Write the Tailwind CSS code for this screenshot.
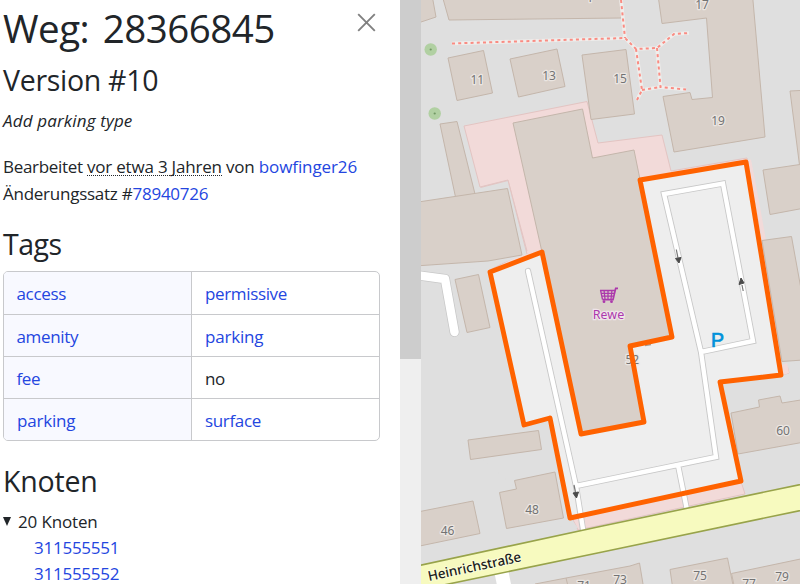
<!DOCTYPE html>
<html lang="de">
<head>
<meta charset="utf-8">
<title>Weg: 28366845</title>
<script src="https://cdn.jsdelivr.net/npm/@tailwindcss/browser@4"></script>
</head>
<body class="w-[800px] h-[584px] overflow-hidden bg-white">
<div class="flex h-[584px] overflow-hidden font-['Open_Sans','Noto_Sans',sans-serif] text-[#212529]">
  <aside class="w-[400px] shrink-0 overflow-hidden pl-[3px] pr-5 text-[17px] leading-[27px] tracking-[-0.3px]">
    <header class="flex h-[58px] items-start justify-between">
      <h1 class="whitespace-nowrap text-[38.5px] leading-[57px] tracking-[-0.5px] [word-spacing:4px]">Weg: 28366845</h1>
      <button class="mt-[13px] mr-1" aria-label="Schließen"><svg class="block" width="19" height="19" viewBox="0 0 19 19" fill="none" stroke="#808080" stroke-width="1.9"><path d="M1.2 1.2 17.8 17.8M17.8 1.2 1.2 17.8"/></svg></button>
    </header>
    <h2 class="mt-[3px] text-[28.5px] leading-[38px] tracking-[-0.3px]">Version #10</h2>
    <p class="mt-2 italic tracking-[0.15px]">Add parking type</p>
    <p class="mt-[19px] whitespace-nowrap tracking-[-0.2px]"><span class="tracking-[-0.3px]">Bearbeitet </span><span class="inline-block h-[23px] border-b border-dotted border-[#212529] leading-[27px] align-top">vor etwa 3 Jahren</span> von <a class="text-[#2446df] tracking-[-0.1px]">bowfinger26</a></p>
    <p class="tracking-[-0.25px]">Änderungssatz #<a class="text-[#2446df]">78940726</a></p>
    <h2 class="mt-[18px] text-[28.5px] leading-[38px] tracking-[-0.5px]">Tags</h2>
    <div class="mt-2 w-[377px] overflow-hidden rounded-[5px] border border-[#c8c9cc] divide-y divide-[#c8c9cc] text-[#2446df] leading-[43px] tracking-[-0.35px]">
      <div class="grid h-[43px] grid-cols-[188px_1fr]"><div class="overflow-hidden border-r border-[#c8c9cc] bg-[#f8f9ff] pl-[12.5px]">access</div><div class="overflow-hidden pl-[13px]">permissive</div></div>
      <div class="grid h-[42px] grid-cols-[188px_1fr]"><div class="overflow-hidden border-r border-[#c8c9cc] bg-[#f8f9ff] pl-[12.5px]">amenity</div><div class="overflow-hidden pl-[13px] tracking-[-0.2px]">parking</div></div>
      <div class="grid h-[42px] grid-cols-[188px_1fr]"><div class="overflow-hidden border-r border-[#c8c9cc] bg-[#f8f9ff] pl-[12.5px]">fee</div><div class="overflow-hidden pl-[13px] text-[#212529]">no</div></div>
      <div class="grid h-[41px] grid-cols-[188px_1fr]"><div class="overflow-hidden border-r border-[#c8c9cc] bg-[#f8f9ff] pl-[13px] tracking-[-0.2px]">parking</div><div class="overflow-hidden pl-[13px]">surface</div></div>
    </div>
    <h2 class="mt-[21px] text-[28.5px] leading-[38px] tracking-[-0.2px]">Knoten</h2>
    <div class="mt-2 flex items-center tracking-[-0.15px]"><svg class="mr-[7px]" width="8" height="9" viewBox="0 0 8 9"><path d="M0 0H8L4 9Z" fill="#212529"/></svg>20 Knoten</div>
    <ul class="pl-[31px] leading-[26px] tracking-[-0.25px] text-[#2446df]"><li>311555551</li><li>311555552</li></ul>
  </aside>
  <div class="w-[21px] shrink-0 bg-[#efefef]"><div class="h-[359px] bg-[#cdcdcd]"></div></div>
  <main class="w-[379px] shrink-0">
    <svg class="block" width="379" height="584" viewBox="421 0 379 584" font-family="'Noto Sans','Open Sans',sans-serif">
      <rect x="421" width="379" height="584" fill="#dfdfdf"/>
      <!-- retail grounds -->
      <path fill="#f2dad9" stroke="#e3c4c2" d="M464 126 587 101.500 598 143 662 135 671 171 747 158 786 361 789 373 782 375 741 481 745 494 578 530 526 424 490 270 527 251 508 180 480 187Z"/>
      <path d="M480.500 187.500 508 180.500 527 254 489 268 421 270V192Z" fill="#dfdfdf"/>
      <path d="M480.500 187.500 508 180.500 527 254" fill="none" stroke="#e3c4c2"/>
      <path d="M489 271 524 424 550 418 570 517 578 528 565 530 460 440 460 271Z" fill="#dfdfdf"/>
      <path d="M747 162 755 181 766 240 782 370 800 360V162Z" fill="#dfdfdf"/>
      <path d="M721 382 782 376 786 375 800 400V500L746 493 741 481Z" fill="#dfdfdf"/>
      <path d="M749 160 753 180 764 240" fill="none" stroke="#f2dad9" stroke-width="4"/>
      <path d="M782 365 787 363 789 373 783 375Z" fill="#f2dad9"/>
      <!-- parking area -->
      <path d="M640 180 746 162 781 375 720 382 741 481 570 518 550 418 524 425 490 272 542 252 581 434 644 422 630 346 672 337Z" fill="#eee"/>
      <!-- buildings -->
      <g fill="#d9d0c9" stroke="#c4b6ab" stroke-width="1">
        <path d="M415 25 421 -5H432L436 17 415 24Z"/>
        <path d="M442 -5 449 20 621.500 18V-5Z"/>
        <path d="M448 58 483.500 50.500 492.500 93 457 100.500Z"/>
        <path d="M510 59 557 49 565 86.500 518.500 97Z"/>
        <path d="M582 55 626 49.500 634.500 114 591 119.500Z"/>
        <path d="M658 -5 662 23.500 706.500 18 712.500 97.500 692 99.500 690 92.500 663 96.500 674 152 765 137 752.500 -5Z"/>
        <path d="M810 90 790 91 799.500 165H810Z"/>
        <path d="M763 170 810 163V207L770 214.500Z"/>
        <path d="M762 240.500 791.500 236.500 803 300V360L782 361.500Z"/>
        <path d="M440 124 457 121.500 475 194 455.500 197Z"/>
        <path d="M415 202.500 507.500 188.500 522 255 488 261 415 266Z"/>
        <path d="M455 279.500 478.500 274.500 490 327.500 467 332.500Z"/>
        <path d="M513 123 582.500 109 592.500 158 634 150 672 337 630 346 644 422 581 434 542 252Z"/>
        <path d="M468 440 538.500 430.500 541.500 449.500 470.500 459.500Z"/>
        <path d="M499.500 492.500 516.500 489 514.500 480.500 555 472 563.500 518 506.500 528.500Z"/>
        <path d="M415 512.500 473 501 480 533.500 415 547Z"/>
        <path d="M731 413 759.500 407 758.500 400 780 396 782 403 810 398.500V441L738 454Z"/>
        <path d="M535 584 566 578 630 566 639.500 563 644 590H535Z"/>
        <path d="M566 578 569 590"/>
        <path d="M670 569.500 727.500 558 734 590H673Z"/>
        <path d="M731.500 573.500 810 557V590H735Z"/>
      </g>
      <!-- green trees -->
      <g fill="#b1d0a2"><circle cx="430.700" cy="49.500" r="6.200"/><circle cx="434.700" cy="113.500" r="6.200"/></g>
      <g fill="#719864"><circle cx="430.700" cy="49.500" r="1.100"/><circle cx="434.700" cy="113.500" r="1.100"/></g>
      <!-- footways -->
      <g fill="none">
        <path d="M452 43.500 625 38 636 49 657 48 674 34 689 33M621 0 625 38M636 49 642 90 637 100M657 48 660.500 87 686 89.500M642 90 660.500 87" stroke="#f0eeec" stroke-width="3.600"/>
        <path d="M452 43.500 625 38 636 49 657 48 674 34 689 33M621 0 625 38M636 49 642 90 637 100M657 48 660.500 87 686 89.500M642 90 660.500 87" stroke="#fa8b82" stroke-width="2" stroke-dasharray="3 3.200"/>
      </g>
      <!-- service ways -->
      <g fill="none" stroke-linecap="round">
        <g stroke="#c8c8c8">
          <path d="M528 271 576 486 583 530M576 486 716 457 701 352 664 194 723 183.500 753 341 701 352M678 465 687 510" stroke-width="6.200"/>
          <path d="M415 275 445 279 454.500 332" stroke-width="10" stroke-linejoin="round"/>
        </g>
        <g stroke="#fff">
          <path d="M528 271 576 486 583 529M576 486 716 457 701 352 664 194 723 183.500 753 341 701 352M678 465 687 510" stroke-width="4.400"/>
          <path d="M415 275 445 279 454.500 332" stroke-width="8.500" stroke-linejoin="round"/>
        </g>
      </g>
      <!-- Heinrichstraße -->
      <path d="M500 565 505.500 592" stroke="#fff" stroke-width="14"/>
      <path d="M410 567.500 600 526.500 810 482.500V508.500L600 552.500 410 592Z" fill="#f7fabf" stroke="#98a34a" stroke-width="1.600"/>
      <!-- one-way arrows -->
      <g fill="#4a4a4a" stroke="#4a4a4a" stroke-width="1">
        <path d="M676.300 249.500 678 258M743.200 291 742 285M574 485 575.500 492" stroke="#777" stroke-width="1.200"/>
        <path d="M675.500 258.500 681 257.500 679 263Z"/>
        <path d="M739 284.500 744 283 741 278Z"/>
        <path d="M573 493 578.500 492 576.500 498Z"/>
      </g>
      <!-- house numbers -->
      <g fill="#737373" font-size="12" text-anchor="middle" stroke="#ebe6e2" stroke-width="2.600" paint-order="stroke" stroke-linejoin="round">
        <text x="477.300" y="83.500">11</text><text x="549" y="79.500">13</text><text x="620" y="82.500">15</text>
        <text x="702" y="8.500">17</text><text x="718" y="125">19</text><text x="632.300" y="363.500">52</text>
        <text x="783" y="435">60</text><text x="532" y="513.500">48</text><text x="447.500" y="535">46</text>
        <text x="620" y="584">73</text><text x="584" y="590">71</text><text x="700" y="579.500">75</text><text x="749" y="587.500">77</text><text x="782" y="581">79</text>
        <text x="590" y="1.500">1</text>
      </g>
      <path d="M645 345.500 651 344.500" stroke="#a39b94" stroke-width="1.500"/>
      <text transform="translate(429 581) rotate(-12)" font-size="13.500" font-weight="500" fill="#1c1c1c" stroke="#fafcd8" stroke-width="2" paint-order="stroke" textLength="95">Heinrichstraße</text>
      <!-- supermarket -->
      <g fill="none" stroke="#ac39ac" stroke-width="1.700">
        <path d="M618 288.300H615.700L613 299.700H602.500"/>
        <path d="M600 290.500H615M601 293.300H614.500M601.500 296.200H613.500M600.500 290 602.500 299.500M604 290 605 299M608 290V299M612 290 611 299" stroke-width="1.300"/>
      </g>
      <circle cx="604" cy="301.700" r="1.400" fill="#ac39ac"/><circle cx="611.500" cy="301.700" r="1.400" fill="#ac39ac"/>
      <text x="608.500" y="318.800" font-size="12.500" text-anchor="middle" textLength="31.500" fill="#ac39ac" stroke="#efe4e9" stroke-width="2.400" paint-order="stroke">Rewe</text>
      <text x="711" y="347" font-size="19.500" font-family="'Liberation Sans',sans-serif" fill="#0092da" stroke="#0092da" stroke-width=".7">P</text>
      <!-- selected way -->
      <path d="M640 180 746 162 781 375 720 382 741 481 570 518 550 418 524 425 490 272 542 252 581 434 644 422 630 346 672 337Z" fill="none" stroke="#ff6200" stroke-width="4.900" stroke-linejoin="round"/>
    </svg>
  </main>
</div>
</body>
</html>
